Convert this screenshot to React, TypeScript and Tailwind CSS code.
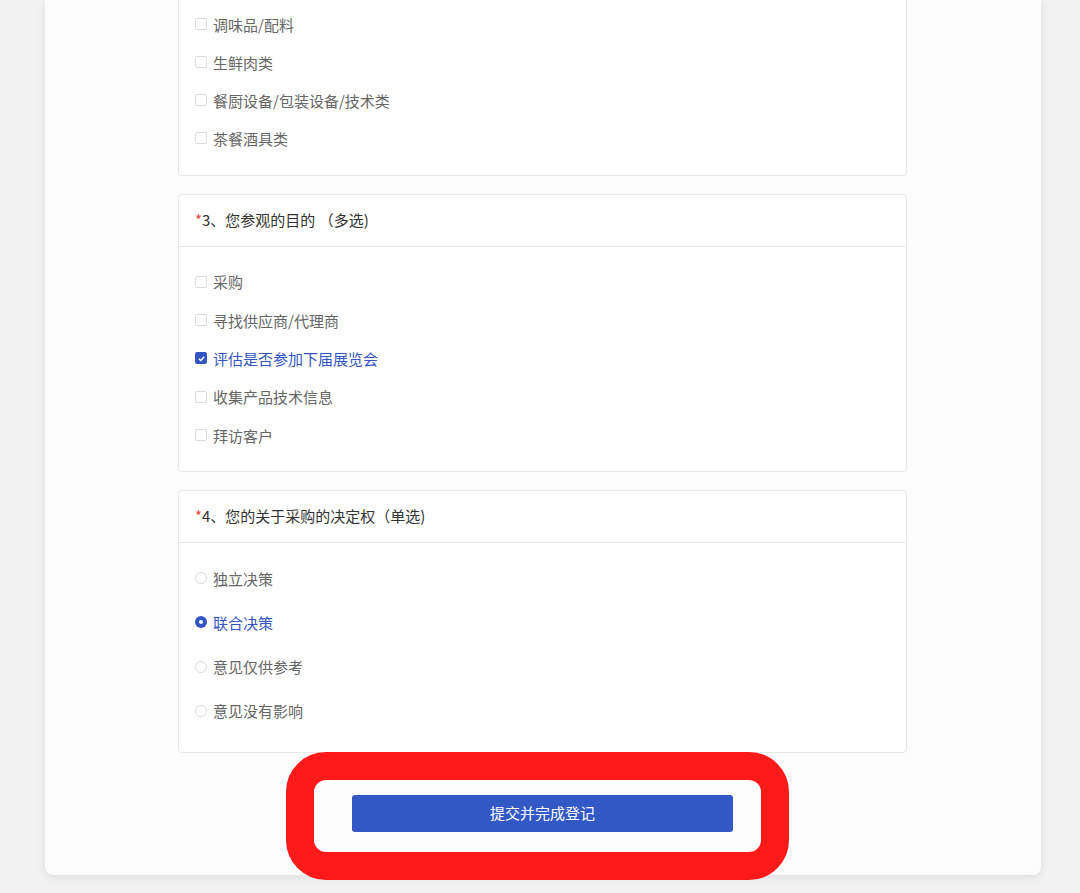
import React from "react";

const font = { fontFamily: '"Noto Sans CJK SC", "Noto Sans", sans-serif' };

function Check({ checked }: { checked?: boolean }) {
  if (checked) {
    return (
      <span className="w-[12px] h-[12px] rounded-[2px] bg-[#3355c4] flex items-center justify-center shrink-0">
        <svg width="9" height="9" viewBox="0 0 10 10">
          <path d="M2 5.2 L4.2 7.2 L8 3" fill="none" stroke="#fff" strokeWidth="1.5" />
        </svg>
      </span>
    );
  }
  return <span className="w-[12px] h-[12px] rounded-[2px] border border-[#dcdcdc] bg-white shrink-0" />;
}

function Radio({ checked }: { checked?: boolean }) {
  if (checked) {
    return (
      <span className="w-[12px] h-[12px] rounded-full bg-[#3355c4] flex items-center justify-center shrink-0">
        <span className="w-[4px] h-[4px] rounded-full bg-white" />
      </span>
    );
  }
  return <span className="w-[12px] h-[12px] rounded-full border border-[#dcdcdc] bg-white shrink-0" />;
}

function Option({ label, checked, radio, h }: { label: string; checked?: boolean; radio?: boolean; h: string }) {
  return (
    <div className={`flex items-center gap-[6px] ${h}`}>
      {radio ? <Radio checked={checked} /> : <Check checked={checked} />}
      <span className={`text-[15px] leading-none ${checked ? "text-[#3355c4]" : "text-[#666666]"}`}>{label}</span>
    </div>
  );
}

function Header({ text }: { text: string }) {
  return (
    <div className="h-[52px] border-b border-[#e8e8e8] flex items-center pl-[16px] text-[15px] text-[#333333]">
      <span className="text-[#e8463a]">*</span>
      <span>{text}</span>
    </div>
  );
}

export default function App() {
  return (
    <div className="min-h-[893px] bg-[#f2f2f2] pl-[45px] pr-[39px] pb-[18px]" style={font}>
      <div className="bg-[#fcfcfc] rounded-b-[8px] shadow-[0_2px_10px_rgba(0,0,0,0.09)] pl-[133px] pr-[134px]">
        <div className="bg-white border border-t-0 border-[#e8e8e8] rounded-b-[4px] pl-[16px] pt-[5px] pb-[18px]">
          {["调味品/配料", "生鲜肉类", "餐厨设备/包装设备/技术类", "茶餐酒具类"].map((t) => (
            <Option key={t} label={t} h="h-[38px]" />
          ))}
        </div>

        <div className="mt-[18px] bg-white border border-[#e8e8e8] rounded-[4px]">
          <Header text="3、您参观的目的 （多选)" />
          <div className="pl-[16px] pt-[15.5px] pb-[16.5px]">
            <Option label="采购" h="h-[38.4px]" />
            <Option label="寻找供应商/代理商" h="h-[38.4px]" />
            <Option label="评估是否参加下届展览会" checked h="h-[38.4px]" />
            <Option label="收集产品技术信息" h="h-[38.4px]" />
            <Option label="拜访客户" h="h-[38.4px]" />
          </div>
        </div>

        <div className="mt-[18px] bg-white border border-[#e8e8e8] rounded-[4px]">
          <Header text="4、您的关于采购的决定权（单选)" />
          <div className="pl-[16px] pt-[13px] pb-[19px]">
            <Option radio label="独立决策" h="h-[44.3px]" />
            <Option radio label="联合决策" checked h="h-[44.3px]" />
            <Option radio label="意见仅供参考" h="h-[44.3px]" />
            <Option radio label="意见没有影响" h="h-[44.3px]" />
          </div>
        </div>

        <div className="pt-[42px] pb-[43px] flex justify-center">
          <div className="relative">
            <button className="w-[381px] h-[37px] rounded-[3px] bg-[#3258c6] text-white text-[15px] flex items-center justify-center">
              提交并完成登记
            </button>
            <div className="absolute left-[-66px] right-[-56px] top-[-43px] bottom-[-48px] border-[28px] border-[#ff1a1a] rounded-[40px] pointer-events-none" />
          </div>
        </div>
      </div>
    </div>
  );
}
